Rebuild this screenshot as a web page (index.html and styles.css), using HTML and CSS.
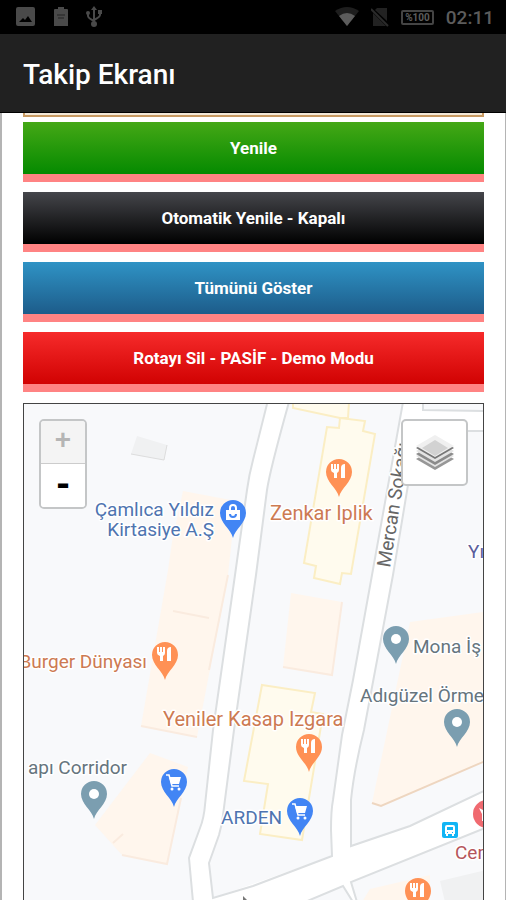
FILE: index.html
```html
<!DOCTYPE html>
<html lang="tr">
<head>
  <meta charset="UTF-8">
  <meta name="viewport" content="width=device-width, initial-scale=1.0">
  <title>Takip Ekranı</title>
  <link rel="stylesheet" href="styles.css">
</head>
<body>

<div class="status-bar">
  <div class="status-left">
    <svg width="20" height="20" viewBox="0 0 20 20"><path fill="#4a4a4a" fill-rule="evenodd" d="M2 0h15a2 2 0 0 1 2 2v15a2 2 0 0 1-2 2H2a2 2 0 0 1-2-2V2a2 2 0 0 1 2-2zM3 15h13l-4-6-3 4-2-2z"/></svg>
    <svg width="14" height="20" viewBox="0 0 14 20"><path fill="#4a4a4a" d="M1 2h3V0h6v2h3a1 1 0 0 1 1 1v16H0V3a1 1 0 0 1 1-1z"/><path d="M3 8h8M4 11h6" stroke="#222" stroke-width="1"/></svg>
    <svg width="16" height="22" viewBox="0 0 16 22"><g fill="none" stroke="#4a4a4a" stroke-width="2"><path d="M8 3v15M2 7v3q0 2 6 5M14 6v3q0 2-6 5"/></g><g fill="#4a4a4a"><path d="M8 0l3 4H5z"/><circle cx="8" cy="18" r="3"/><circle cx="2" cy="7" r="2"/><path d="M12 4h4v4h-4z"/></g></svg>
  </div>
  <div class="status-right">
    <svg width="24" height="20" viewBox="0 0 24 20"><path fill="#1e1e1e" d="M0 4q12-8 24 0L12 19z"/><path fill="#5c5c5c" d="M4 9q8-6 16 0l-8 10z"/></svg>
    <svg width="18" height="20" viewBox="0 0 18 20"><path fill="#222" d="M6 1h10v13L4 3zM2 6l13 13H2z"/><path d="M0 2l17 17" stroke="#2b2b2b" stroke-width="2"/></svg>
    <span class="battery">%100</span>
    <span class="clock">02:11</span>
  </div>
</div>

<header class="app-bar">
  <h1>Takip Ekranı</h1>
</header>

<main class="content">
  <div class="info-box"></div>
  <button type="button" class="btn btn-green">Yenile</button>
  <button type="button" class="btn btn-black">Otomatik Yenile - Kapalı</button>
  <button type="button" class="btn btn-blue">Tümünü Göster</button>
  <button type="button" class="btn btn-red">Rotayı Sil - PASİF - Demo Modu</button>

  <div class="map">
    <svg class="map-tiles" viewBox="24 404 460 496" preserveAspectRatio="xMinYMin slice">
      <defs>
        <path id="pin" d="M0 25C-2 16-13 10-13 0A13 13 0 0 1 13 0C13 10 2 16 0 25z"/>
        <g id="food" fill="#fff"><path d="M-8-8h2v5h1v-5h2v5h1v-5h2v6q0 2-2 3v5h-3v-5q-3-1-3-3z"/><path d="M2 6V-4q0-4 4-4V6z"/></g>
        <g id="cart"><path fill="#fff" d="M-5-5H7L5 2h-8z"/><path d="M-8-7h3l3 11h7" fill="none" stroke="#fff" stroke-width="1.5"/><circle cx="-2" cy="7" r="1.5" fill="#fff"/><circle cx="5" cy="7" r="1.5" fill="#fff"/></g>
      </defs>

      <!-- yollar -->
      <g class="road">
        <path d="M267 404L253 460Q249 475 247 490L235 575L213 730L205 805Q204 818 200 828L189 858L193 902H214L213 898L253 886L332 856V890L351 882V846V800Q354 770 364 730L393 575L408 485L417 431H490V411H423V402H403L372 575L353 680L342 735L333 800Q331 810 331 830L332 857L253 886L213 898L209 863L219 835Q222 825 223 815L234 730L256 575L267 490Q270 470 289 402z"/>
        <path d="M213 898L332 856L351 846L410 826L490 788V826L351 882L357 902H353L343 886L305 902H213z"/>
      </g>
      <g class="road-edge">
        <path d="M267 404L253 460Q249 475 247 490L235 575L213 730L205 805Q204 818 200 828L189 858L193 902"/>
        <path d="M289 402Q270 470 267 490L256 575L234 730L223 815Q222 825 219 835L209 863L213 898L253 886L332 856L331 830Q331 810 333 800L342 735L353 680L372 575L403 402"/>
        <path d="M490 431H417L408 485L393 575L364 730Q354 770 351 800V846L410 826L490 788M423 402V410L490 411"/>
        <path d="M490 826L351 882L357 902M353 902L343 886L305 902"/>
      </g>

      <!-- binalar -->
      <g class="building">
        <path d="M183 491L236 501L228 575L197 737L141 726L168 570L172 542z"/>
        <path d="M291 593L342 602L332 675L283 667z"/>
        <path d="M410 622L490 611V759L381 806L372 803z"/>
        <path d="M150 753L188 767L167 864L122 855L95 825z"/>
        <path d="M362 902L370 889L430 875V902z"/>
      </g>
      <path class="building-line" d="M141 726L197 737M122 855L167 864L181 798M283 667L332 675L342 602M173 611L209 618M113 843L123 834M228 575L209 670"/>
      <path d="M372 803L381 806L490 759" fill="none" stroke="#eed6c0" stroke-width="2"/>
      <g class="building-yellow">
        <path d="M293 402V408L340 418H348L349 402z"/>
        <path d="M340 418L365 421L363 431L375 434L351 574L342 573L340 584L314 578L316 566L304 563L327 427L339 428z"/>
        <path d="M262 685L315 693L311 712L323 714L302 840L260 834L268 784L244 781z"/>
      </g>
      <path d="M137 436L167 445L164 460L131 454zM440 881L490 869V902H445z" fill="#f0f1f2"/>
      <path d="M131 454L164 460L167 445" fill="none" stroke="#dddddd"/>

      <!-- işaretler -->
      <g transform="translate(233 513)"><use href="#pin" fill="#4285f4"/><path fill="#fff" d="M-7-3H7V7H-7z"/><path d="M-3-3V-5a3 3 0 0 1 6 0v2" fill="none" stroke="#fff" stroke-width="2"/><path d="M-3 1a3 3 0 0 0 6 0" fill="none" stroke="#4285f4" stroke-width="2"/></g>
      <g transform="translate(339 472)"><use href="#pin" fill="#ff9155"/><use href="#food"/></g>
      <g transform="translate(165 655)"><use href="#pin" fill="#ff9155"/><use href="#food"/></g>
      <g transform="translate(309 747)"><use href="#pin" fill="#ff9155"/><use href="#food"/></g>
      <g transform="translate(418 891)"><use href="#pin" fill="#ff9155"/><use href="#food"/></g>
      <g transform="translate(174 782)"><use href="#pin" fill="#4285f4"/><use href="#cart"/></g>
      <g transform="translate(300 811)"><use href="#pin" fill="#4285f4"/><use href="#cart"/></g>
      <g transform="translate(396 639)"><use href="#pin" fill="#7b9eb0"/><circle r="5" fill="#fff"/></g>
      <g transform="translate(457 722)"><use href="#pin" fill="#7b9eb0"/><circle r="5" fill="#fff"/></g>
      <g transform="translate(94 794)"><use href="#pin" fill="#7b9eb0"/><circle r="5" fill="#fff"/></g>
      <g transform="translate(487 814)"><circle r="14" fill="#f06a70"/><path d="M-8-6l6 3v10h-3v-7z" fill="#fff"/></g>
      <g transform="translate(442 822)"><rect width="16" height="16" rx="2" fill="#12b5f5"/><path fill="#fff" d="M3 5q0-2 2-2h6q2 0 2 2v7h-1v2h-2v-2H6v2H4v-2H3z"/><path fill="#12b5f5" d="M5 5h6v3H5zM5 10h1v1H5zM10 10h1v1h-1z"/></g>

      <g class="label">
        <text x="214" y="516" text-anchor="end" class="shop">Çamlıca Yıldız</text>
        <text x="214" y="536" text-anchor="end" class="shop">Kirtasiye A.Ş</text>
        <text x="270" y="520" class="eat large">Zenkar Iplik</text>
        <text x="147" y="668" text-anchor="end" class="eat">Burger Dünyası</text>
        <text x="163" y="726" class="eat large">Yeniler Kasap Izgara</text>
        <text x="413" y="653" class="place">Mona İş</text>
        <text x="360" y="702" class="place">Adıgüzel Örme</text>
        <text x="127" y="774" text-anchor="end" class="place">apı Corridor</text>
        <text x="282" y="824" text-anchor="end" class="shop">ARDEN</text>
        <text x="455" y="859" class="health">Cem</text>
        <text x="468" y="558" class="civic">Yı</text>
        <text transform="translate(390 568) rotate(-81)" class="street">Mercan Sokağı</text>
      </g>
      <path d="M243 896l4 4h-4z" fill="#777"/>
    </svg>

    <div class="zoom-control">
      <button type="button" class="zoom-in" aria-label="Yakınlaştır" disabled>+</button>
      <button type="button" class="zoom-out" aria-label="Uzaklaştır">-</button>
    </div>
    <button type="button" class="layers" aria-label="Katmanlar">
      <svg width="38" height="38" viewBox="0 0 38 38">
        <path d="M0 25L19 14L38 25L19 36z" fill="#979797"/>
        <path d="M0 22L19 11L38 22L19 33z" fill="#e4e4e4"/>
        <path d="M0 20L19 9L38 20L19 31z" fill="#8b8b8b"/>
        <path d="M0 17L19 6L38 17L19 28z" fill="#e4e4e4"/>
        <path d="M0 14L19 3L38 14L19 25z" fill="#777"/>
        <path d="M0 12L19 1L38 12L19 23z" fill="#f0f0f0"/>
        <path d="M6 14L19 6L32 14L19 22z" fill="#d2d2d2"/>
      </svg>
    </button>
  </div>
</main>

</body>
</html>
```
FILE: styles.css
```css
* { box-sizing: border-box; }
body { margin: 0; height: 100vh; display: flex; flex-direction: column; overflow: hidden; background: #fff; font-family: Roboto, "Noto Sans", sans-serif; }

.status-bar { flex: none; height: 34px; padding: 0 12px 0 16px; display: flex; align-items: center; justify-content: space-between; background: #000; color: #5c5c5c; }
.status-left { display: flex; align-items: center; gap: 18px; }
.status-right { display: flex; align-items: center; gap: 12px; }
.battery { height: 15px; padding: 0 2px; border: 2px solid #444; border-radius: 2px; font-size: 10px; line-height: 11px; font-weight: bold; }
.clock { font-size: 19px; font-weight: 500; }

.app-bar { flex: none; height: 79px; padding: 4px 23px 0; display: flex; align-items: center; background: #212121; border-bottom: 1px solid #000; }
.app-bar h1 { margin: 0; font-size: 28px; line-height: 32px; font-weight: 500; color: #fff; }

.content { flex: 1; min-height: 0; display: flex; flex-direction: column; padding: 0 21px; border-left: 2px solid #b4b4b4; border-right: 1px solid #b4b4b4; }
.info-box { flex: none; height: 4px; margin-bottom: 5px; border: 2px solid #c89a62; border-top: 0; background: #f3e8d8; }

.btn { flex: none; height: 60px; margin: 0 0 10px; padding: 0; border: 0; border-bottom: 8px solid #ff8383; font-family: inherit; font-size: 17px; line-height: 20px; font-weight: bold; color: #fff; background-clip: padding-box; cursor: pointer; }
.btn-green { background-image: linear-gradient(#45a816, #058a00); }
.btn-black { background-image: linear-gradient(#45464b, #000); }
.btn-blue { background-image: linear-gradient(#2f93c5, #1d5c8a); }
.btn-red { background-image: linear-gradient(#f62b2b, #d10202); }

.map { position: relative; flex: 1; min-height: 0; margin-top: 1px; border: 1px solid #444; border-bottom: 0; overflow: hidden; background: #f8f9fb; }
.map-tiles { display: block; width: 100%; height: 100%; }
.road { fill: #fff; }
.road-edge { fill: none; stroke: #dcdfe1; stroke-width: 2; }
.building { fill: #fff6ed; }
.building-line { fill: none; stroke: #faebdf; stroke-width: 2; }
.building-yellow { fill: #fffbee; stroke: #fbeec4; stroke-width: 2; }

.label { font-size: 19px; stroke: #fff; stroke-width: 3px; stroke-linejoin: round; paint-order: stroke; }
.large { font-size: 20px; }
.shop { fill: #4e74b0; }
.eat { fill: #cd7a52; }
.place { fill: #66757e; }
.health { fill: #b5565c; }
.civic { fill: #5a5e9c; }
.street { fill: #666; }

.zoom-control { position: absolute; top: 15px; left: 15px; width: 48px; border: 2px solid #c4c6c7; border-radius: 5px; overflow: hidden; }
.zoom-control button { display: block; width: 100%; height: 43px; padding: 0; border: 0; background: #fff; color: #000; font: bold 28px/42px "Liberation Mono", monospace; }
.zoom-control .zoom-in { background: #f4f4f4; color: #b5b5b5; border-bottom: 1px solid #ccc; }
.zoom-control .zoom-out { font-size: 36px; }
.layers { position: absolute; top: 15px; right: 15px; width: 67px; height: 67px; padding: 0; display: flex; align-items: center; justify-content: center; background: #fff; border: 2px solid #c4c6c7; border-radius: 5px; }
```
